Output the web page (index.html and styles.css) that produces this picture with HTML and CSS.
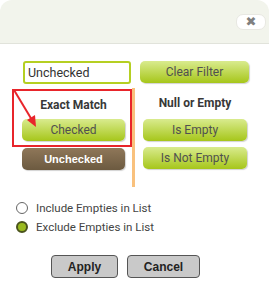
FILE: index.html
```html
<!DOCTYPE html>
<html lang="en">
<head>
    <meta charset="UTF-8">
    <title>Filter</title>
    <link rel="stylesheet" href="styles.css">
</head>
<body>
    <div class="dialog">
        <div class="dialog-header">
            <button class="close-btn">&#10006;</button>
        </div>

        <div class="dialog-body">
            <div class="top-row">
                <input type="text" class="filter-input" value="Unchecked">
                <button class="btn-lime clear-btn">Clear Filter</button>
            </div>

            <div class="match-area">
                <div class="match-left">
                    <div class="highlight-box">
                        <div class="col-title">Exact Match</div>
                        <button class="btn-lime wide">Checked</button>
                    </div>
                    <button class="btn-brown wide">Unchecked</button>
                </div>
                <div class="match-right">
                    <div class="col-title">Null or Empty</div>
                    <button class="btn-lime wide">Is Empty</button>
                    <button class="btn-lime wide">Is Not Empty</button>
                </div>

                <!-- annotation arrow -->
                <svg class="arrow" width="30" height="42" viewBox="0 0 30 42">
                    <line x1="2" y1="2" x2="20" y2="32" stroke="#e8252b" stroke-width="2"/>
                    <polygon points="24,39 15,32 23,27" fill="#e8252b"/>
                </svg>
            </div>

            <div class="options">
                <label class="radio-row">
                    <span class="radio"></span>
                    Include Empties in List
                </label>
                <label class="radio-row">
                    <span class="radio checked"></span>
                    Exclude Empties in List
                </label>
            </div>

            <div class="actions">
                <button class="btn-gray">Apply</button>
                <button class="btn-gray">Cancel</button>
            </div>
        </div>
    </div>
</body>
</html>
```

FILE: styles.css
```css
:root {
    --header-bg: #f2f4ec;
    --lime-top: #d9eb8e;
    --lime-bottom: #a6c61a;
    --brown-top: #8f7759;
    --brown-bottom: #6c5a40;
    --text-color: #444444;
    --orange: #f9c17d;
    --red: #e8252b;
}

body {
    margin: 0;
    background: #ffffff;
    font-family: Roboto, 'Open Sans', sans-serif;
    color: var(--text-color);
}

.dialog {
    width: 269px;
    height: 284px;
    background: #ffffff;
}

.dialog-header {
    height: 44px;
    box-sizing: border-box;
    background: var(--header-bg);
    border-bottom: 1px solid #e1e3db;
    border-radius: 12px 12px 0 0;
    display: flex;
    justify-content: flex-end;
    padding: 14px 3px 0 0;
}

.close-btn {
    width: 30px;
    height: 16px;
    padding: 0;
    border: 1px solid #e8e8e2;
    border-radius: 7px;
    background: #ffffff;
    color: #808080;
    font-size: 13px;
    line-height: 14px;
    font-family: 'DejaVu Sans', sans-serif;
}

.dialog-body {
    padding-top: 17px;
}

.top-row {
    display: flex;
    align-items: flex-start;
    padding-left: 23px;
    gap: 9px;
}

.filter-input {
    width: 108px;
    height: 23px;
    box-sizing: border-box;
    border: 2px solid #b5cf22;
    border-radius: 3px;
    padding: 0 3px;
    font-family: Roboto, 'Open Sans', sans-serif;
    font-size: 12.5px;
    color: #333333;
    outline: none;
}

.clear-btn {
    width: 109px;
    height: 22px;
}

button {
    font-family: Roboto, 'Open Sans', sans-serif;
}

.btn-lime {
    border: none;
    border-radius: 5px;
    background: linear-gradient(var(--lime-top), var(--lime-bottom));
    box-shadow: 1px 1px 1px rgba(0, 0, 0, 0.18);
    color: #505050;
    font-size: 12px;
    padding: 0;
}

.btn-brown {
    border: none;
    border-radius: 5px;
    background: linear-gradient(var(--brown-top), var(--brown-bottom));
    box-shadow: 1px 1px 1px rgba(0, 0, 0, 0.18);
    color: #ffffff;
    font-family: 'Liberation Sans', Arial, sans-serif;
    font-weight: bold;
    font-size: 11px;
    padding: 0;
}

.wide {
    width: 103px;
    height: 22px;
}

.match-area {
    position: relative;
    display: flex;
    margin-top: 4px;
    height: 99px;
}

.match-left {
    width: 120px;
    margin-left: 12px;
    border-right: 3px solid var(--orange);
    display: flex;
    flex-direction: column;
}

.highlight-box {
    height: 58px;
    margin-top: 1px;
    box-sizing: border-box;
    border: 2px solid var(--red);
    padding: 6px 0 0 8px;
    display: flex;
    flex-direction: column;
}

.highlight-box .col-title {
    width: 103px;
}

.match-left .btn-brown {
    margin: 1px 0 0 10px;
}

.col-title {
    font-size: 12px;
    font-weight: 700;
    text-align: center;
    color: #383838;
    height: 22px;
    line-height: 16px;
}

.match-right {
    padding: 7px 0 0 8px;
    display: flex;
    flex-direction: column;
    gap: 6px;
}

.match-right .col-title {
    width: 104px;
    margin-bottom: -4px;
}

.match-right .btn-lime {
    width: 104px;
}

.arrow {
    position: absolute;
    left: 12px;
    top: 0;
}

.options {
    margin-top: 14px;
    padding-left: 16px;
    display: flex;
    flex-direction: column;
    gap: 6px;
}

.radio-row {
    display: flex;
    align-items: center;
    gap: 8px;
    font-size: 11.5px;
    color: #444444;
    height: 13px;
}

.radio {
    width: 12px;
    height: 12px;
    box-sizing: border-box;
    border: 1px solid #666666;
    border-radius: 50%;
    background: #ffffff;
}

.radio.checked {
    border: 2px solid #4a531c;
    background: #9aba1f;
}

.actions {
    margin-top: 22px;
    padding-left: 51px;
    display: flex;
    gap: 9px;
}

.btn-gray {
    height: 23px;
    width: 67px;
    border: 1px solid #555555;
    border-radius: 4px;
    background: #c9c9c9;
    font-family: 'Liberation Sans', Arial, sans-serif;
    font-weight: bold;
    font-size: 12px;
    color: #222222;
    padding: 0;
}

.btn-gray + .btn-gray {
    width: 73px;
}
```
